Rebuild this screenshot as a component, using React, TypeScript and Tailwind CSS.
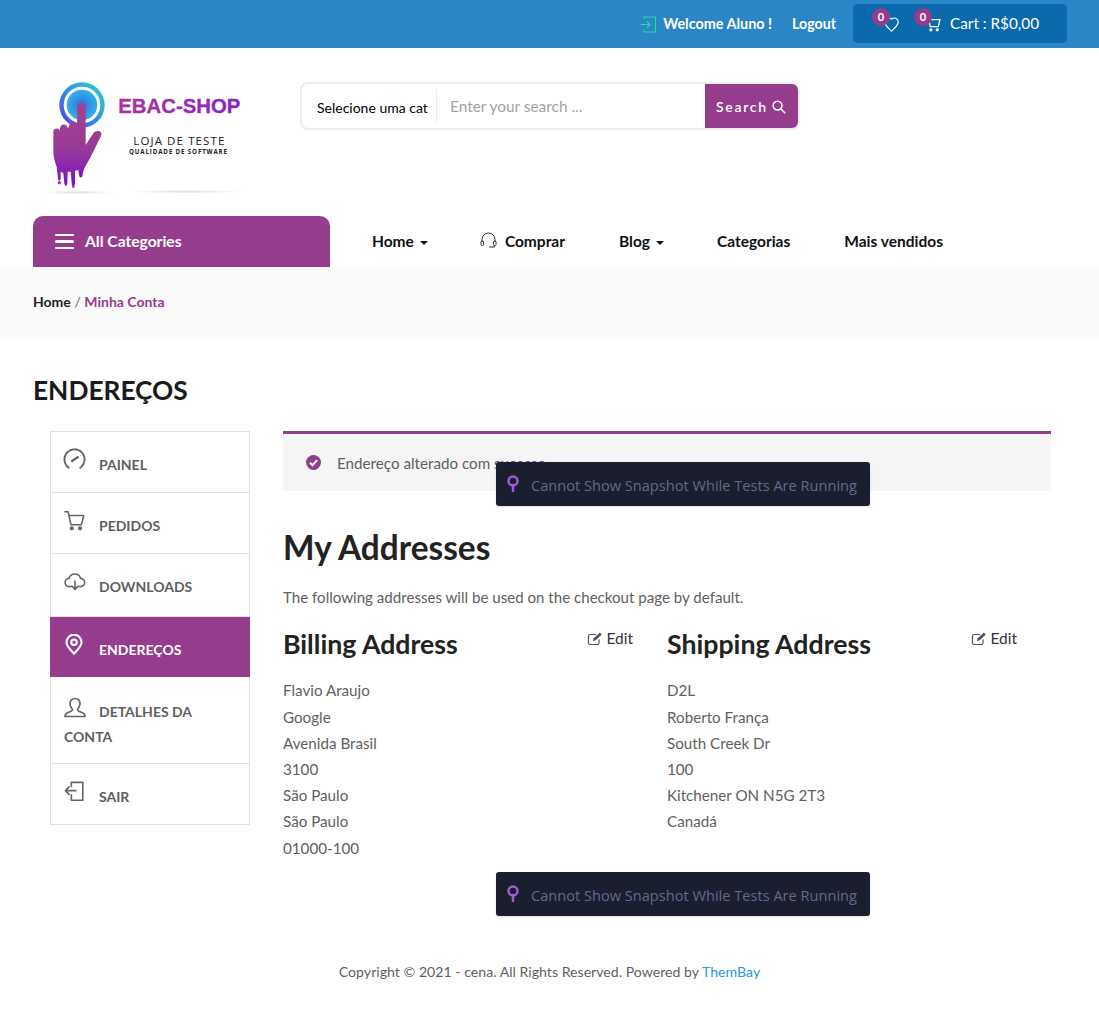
import React from "react";

function Ico({ children, size = 24, vb = "0 0 24 24", sw = 1.5, color = "currentColor", cls = "" }: any) {
  return (
    <svg width={size} height={size} viewBox={vb} fill="none" stroke={color} strokeWidth={sw} strokeLinecap="round" strokeLinejoin="round" className={cls}>
      {children}
    </svg>
  );
}

function Logo() {
  return (
    <svg width="210" height="122" viewBox="0 0 210 122" className="block overflow-visible">
      <defs>
        <linearGradient id="ring" x1="0" y1="1" x2="1" y2="0">
          <stop offset="0" stopColor="#5a38e0" />
          <stop offset="0.5" stopColor="#2f8fe8" />
          <stop offset="1" stopColor="#2fdcc0" />
        </linearGradient>
        <radialGradient id="core">
          <stop offset="0" stopColor="#2a6fe8" />
          <stop offset="1" stopColor="#35b0e8" />
        </radialGradient>
        <linearGradient id="hand" x1="0" y1="0" x2="0" y2="1">
          <stop offset="0" stopColor="#a5418c" />
          <stop offset="0.55" stopColor="#983a98" />
          <stop offset="1" stopColor="#7a10c8" />
        </linearGradient>
        <linearGradient id="word" x1="0" y1="0" x2="1" y2="0">
          <stop offset="0" stopColor="#a8359c" />
          <stop offset="1" stopColor="#8a22c4" />
        </linearGradient>
        <radialGradient id="sh">
          <stop offset="0" stopColor="#dcdaea" />
          <stop offset="1" stopColor="#ffffff" />
        </radialGradient>
      </defs>
      <g transform="translate(-6,-6) scale(0.33333)">
        <ellipse cx="145" cy="367" rx="105" ry="6" fill="url(#sh)" />
        <ellipse cx="470" cy="365" rx="170" ry="5" fill="url(#sh)" />
        <circle cx="156" cy="105" r="68" fill="url(#ring)" />
        <circle cx="156" cy="105" r="55" fill="#fff" />
        <circle cx="156" cy="105" r="46" fill="url(#core)" />
        <path
          d="M142 110 C142 95 167 95 167 110 L167 225 L190 190 C197 178 220 182 213 198 L180 265 C165 290 160 300 158 315 C157 325 148 325 147 315 L145 300 L135 302 L135 340 C135 352 125 352 125 340 L122 305 L113 305 L112 340 C112 350 104 350 103 340 L100 310 L92 305 L92 325 C92 335 84 335 84 325 L80 290 C72 270 70 255 70 240 L70 185 C70 172 90 172 90 185 L90 175 C92 160 112 160 113 175 L117 170 C118 152 140 152 141 170 Z"
          fill="url(#hand)"
        />
        <circle cx="88" cy="338" r="5" fill="#d020a0" />
        <circle cx="130" cy="350" r="4" fill="#d020a0" />
      </g>
      <text x="82.300" y="36.700" textLength="122" lengthAdjust="spacingAndGlyphs" fontFamily="Liberation Sans" fontWeight="700" fontSize="21" fill="url(#word)" stroke="url(#word)" strokeWidth="0.300">EBAC-SHOP</text>
      <text x="97.300" y="69" textLength="91" fontFamily="Open Sans" fontWeight="400" fontSize="11.500" fill="#222">LOJA DE TESTE</text>
      <text x="93" y="78" textLength="98" fontFamily="Open Sans" fontWeight="700" fontSize="6.200" fill="#222">QUALIDADE DE SOFTWARE</text>
    </svg>
  );
}

function Toast({ top }: { top: string }) {
  return (
    <div className={`absolute left-[496px] ${top} w-[374px] h-[44px] bg-[#1b1e2e] rounded-[3px] flex items-center pl-[11px] shadow-sm z-10`}>
      <svg width="12" height="17" viewBox="0 0 12 17" className="mr-[12px] -mt-[2px] shrink-0">
        <circle cx="6" cy="6" r="4.500" fill="none" stroke="#9c5fd8" strokeWidth="2.500" />
        <path d="M6 10 V16" stroke="#9c5fd8" strokeWidth="2.500" strokeLinecap="round" />
      </svg>
      <span className="font-['Open_Sans',sans-serif] text-[14.600px] text-[#626b8c] whitespace-nowrap mt-[3px]">Cannot Show Snapshot While Tests Are Running</span>
    </div>
  );
}

function SideItem({ icon, label, active, h, wrap }: any) {
  return (
    <div
      className={`border-b border-[#e2e2e2] px-[13px] text-[14px] font-bold ${active ? "bg-[#963c8c] text-white border-b-0 mx-[-1px] px-[14px]" : "text-[#5f5f5f]"} ${h}`}
    >
      {wrap ? (
        <div className="pt-[19px] leading-[25px]">
          <span className="inline-block w-[35px] h-[24px] align-[-3px]">{icon}</span>DETALHES DA
          <br />
          CONTA
        </div>
      ) : (
        <div className="flex items-center h-full">
          <span className="w-[35px] -mt-[5px] shrink-0">{icon}</span>
          <span className="mt-[5px]">{label}</span>
        </div>
      )}
    </div>
  );
}

const billing = ["Flavio Araujo", "Google", "Avenida Brasil", "3100", "São Paulo", "São Paulo ", "01000-100"];
const shipping = ["D2L", "Roberto França", "South Creek Dr", "100", "Kitchener ON N5G 2T3", "Canadá"];

function EditLink() {
  return (
    <span className="flex items-center gap-[3px] text-[15.500px] text-[#333] leading-none">
      <svg width="16" height="15" viewBox="0 0 16 15" fill="none" stroke="#555" strokeWidth="1.200">
        <path d="M12 8.500 V12 A1.500 1.500 0 0 1 10.500 13.500 H3 A1.500 1.500 0 0 1 1.500 12 V5 A1.500 1.500 0 0 1 3 3.500 H9" />
        <path d="M6 10 L6.500 7.500 L12.800 1.500 L14.800 3.500 L8.500 9.500 Z" fill="#555" stroke="none" />
      </svg>
      Edit
    </span>
  );
}

function Address({ title, lines, cls }: any) {
  return (
    <div className={cls}>
      <div className="flex justify-between items-start">
        <h3 className="text-[26.700px] font-bold leading-[32px] text-[#222]">{title}</h3>
        <div className="mt-[3px]"><EditLink /></div>
      </div>
      <div className="mt-[17.400px] text-[15.200px] leading-[26.200px] text-[#5f5f5f]">
        {lines.map((l: string) => (
          <div key={l}>{l}</div>
        ))}
      </div>
    </div>
  );
}

const Caret = () => <span className="ml-[6px] mt-[2px] w-0 h-0 border-x-[4px] border-x-transparent border-t-[4px] border-t-[#111]" />;

export default function App() {
  return (
    <div className="relative w-[1099px] h-[1020px] bg-white font-['Lato',sans-serif] overflow-hidden">
      {/* top bar */}
      <div className="h-[48px] bg-[#2b86c5] flex items-center justify-end pr-[32px]">
        <svg width="17" height="17" viewBox="0 0 17 17" fill="none" stroke="#22dcb0" strokeWidth="1.100" className="mr-[6px]">
          <path d="M4 3 V1 H15.500 V16 H4 V14" />
          <path d="M0.500 8.500 H10 M7 5.500 L10 8.500 L7 11.500" />
        </svg>
        <span className="text-white font-bold text-[14.400px] mr-[20px] -mt-[1px]">Welcome Aluno !</span>
        <span className="text-white font-bold text-[14.200px] mr-[17px] -mt-[1px]">Logout</span>
        <div className="relative w-[214px] h-[39px] -mt-[1px] bg-[#0b6aab] rounded-[5px] flex items-center pl-[30px]">
          <span className="absolute left-[19px] top-[4px] w-[18px] h-[18px] rounded-full bg-[#963c8c] text-white text-[11px] font-bold flex items-center justify-center z-10">0</span>
          <Ico size={19} sw={1.500} color="#fff" cls="mt-[1px] -ml-[1px]"><path d="M20.500 8.500 a5 5 0 0 0-8.500-3.200 a5 5 0 0 0-8.500 3.200 c0 5 5 8 8.500 12 c3.500-4 8.500-7 8.500-12z" /></Ico>
          <span className="absolute left-[61px] top-[4px] w-[18px] h-[18px] rounded-full bg-[#963c8c] text-white text-[11px] font-bold flex items-center justify-center z-10">0</span>
          <svg width="16" height="16" viewBox="0 0 15 15" fill="none" stroke="#fff" strokeWidth="1.200" className="ml-[24px] mt-[1px]">
            <path d="M0.500 1.500 H3 L5 10 H12.500 L14 3.500 H3.500" />
            <circle cx="5.500" cy="13" r="0.900" fill="#fff" />
            <circle cx="11.500" cy="13" r="0.900" fill="#fff" />
          </svg>
          <span className="text-white text-[15.300px] ml-[9px] whitespace-nowrap">Cart : R$0,00</span>
        </div>
      </div>

      {/* logo + search */}
      <div className="h-[168px] flex items-start pl-[36px]">
        <div className="mt-[28px] w-[210px]"><Logo /></div>
        <div className="ml-[54px] mt-[34px] w-[500px] h-[48px] border-2 border-[#ededed] rounded-[8px] flex items-stretch overflow-hidden bg-white">
          <div className="w-[135px] shrink-0 relative flex items-center pl-[15px] text-[14px] text-black whitespace-nowrap pt-[3px]">
            Selecione uma cat
            <span className="absolute right-0 top-[5px] bottom-[5px] w-px bg-[#ededed]" />
          </div>
          <div className="flex-1 flex items-center pl-[13px] text-[15.400px] text-[#a3a3a3] pt-[1px]">Enter your search ...</div>
          <div className="w-[93px] bg-[#963c8c] flex items-center pl-[11px] text-white text-[14px] font-semibold tracking-[1.700px] gap-[3px]">
            Search
            <Ico size={15} sw={2.600}><circle cx="10.500" cy="10.500" r="7" /><path d="M16 16l6 6" /></Ico>
          </div>
        </div>
      </div>

      {/* nav */}
      <div className="h-[51px] flex pl-[33px]">
        <div className="w-[297px] bg-[#963c8c] rounded-t-[10px] flex items-center pl-[22px] text-white font-bold text-[15.600px]">
          <span className="flex flex-col gap-[4px] mr-[11px]">
            <span className="block w-[19px] h-[2.500px] bg-white rounded" />
            <span className="block w-[19px] h-[2.500px] bg-white rounded" />
            <span className="block w-[19px] h-[2.500px] bg-white rounded" />
          </span>
          All Categories
        </div>
        <div className="flex items-center pl-[42px] text-[15.500px] font-bold text-[#111] whitespace-nowrap">
          <span className="flex items-center">Home<Caret /></span>
          <span className="flex items-center ml-[52px]">
            <svg width="17" height="17" viewBox="0 0 17 17" fill="none" stroke="#333" strokeWidth="1" className="mr-[8px] -mt-[3px]">
              <path d="M2 10 V7.500 A6.500 6.500 0 0 1 15 7.500 V10" />
              <rect x="1" y="9" width="2.500" height="4.500" rx="1" />
              <rect x="13.500" y="9" width="2.500" height="4.500" rx="1" />
              <path d="M14.500 13.500 V15 H9" />
            </svg>
            Comprar
          </span>
          <span className="flex items-center ml-[54px]">Blog<Caret /></span>
          <span className="ml-[53px]">Categorias</span>
          <span className="ml-[54px]">Mais vendidos</span>
        </div>
      </div>

      {/* breadcrumb */}
      <div className="h-[70px] bg-[#fafafa] pl-[33px] pt-[25px] text-[14px] leading-[20px] font-bold">
        <span className="text-[#222]">Home</span>
        <span className="text-[#666] font-normal"> / </span>
        <span className="text-[#963c8c]">Minha Conta</span>
      </div>

      {/* title */}
      <h1 className="pl-[33px] mt-[36px] text-[26.300px] leading-[34px] font-bold text-[#1a1a1a]">ENDEREÇOS</h1>

      {/* main */}
      <div className="flex mt-[24px] pl-[50px]">
        <div className="w-[200px] h-[394px] border border-[#e2e2e2] shrink-0 box-border">
          <SideItem h="h-[61px]" label="PAINEL" icon={
            <Ico size={23} sw={2} color="#666" cls="-ml-[1px]">
              <path d="M6 20.500 A10.500 10.500 0 1 1 18 20.500" strokeDasharray="4 1.200" />
              <path d="M9.500 13.500 L15.500 9.500" strokeWidth={2.400} />
            </Ico>
          } />
          <SideItem h="h-[61px]" label="PEDIDOS" icon={
            <Ico size={22} sw={1.700} color="#666">
              <path d="M1 2 H4.500 L7.500 16 H19 L21.500 6 H5.500" />
              <circle cx="8.500" cy="20" r="1.400" fill="#666" />
              <circle cx="17.500" cy="20" r="1.400" fill="#666" />
            </Ico>
          } />
          <SideItem h="h-[63px] pb-[2px]" label="DOWNLOADS" icon={
            <Ico size={22} sw={1.800} color="#666">
              <path d="M7 17 H6 A4.500 4.500 0 0 1 5.500 8 A6.500 6.500 0 0 1 18 8 A4.500 4.500 0 0 1 18 17 H17" />
              <path d="M12 11 V20 M8.500 16.500 L12 20 L15.500 16.500" />
            </Ico>
          } />
          <SideItem active h="h-[60px]" label="ENDEREÇOS" icon={
            <Ico size={22} sw={2.300} color="#fff" cls="-ml-[1px]">
              <path d="M12 21.500 C8 17 3.800 13.500 3.800 9 A8.200 8.200 0 0 1 20.200 9 C20.200 13.500 16 17 12 21.500 Z" />
              <circle cx="12" cy="9" r="3" />
            </Ico>
          } />
          <SideItem wrap h="h-[87px]" icon={
            <Ico size={24} sw={1.700} color="#666" cls="-ml-[1px]">
              <path d="M12 2.500 A5 5 0 0 0 7 7.500 C7 10 8 12 9.500 13.500 C9.500 15 8 15.500 5 16.500 C3 17.200 2 18.500 2 20.500 H22 C22 18.500 21 17.200 19 16.500 C16 15.500 14.500 15 14.500 13.500 C16 12 17 10 17 7.500 A5 5 0 0 0 12 2.500 Z" />
            </Ico>
          } />
          <SideItem h="h-[60px] border-b-0" label="SAIR" icon={
            <Ico size={22} sw={1.800} color="#666">
              <path d="M8 6 V1.500 H20.500 V21 H8 V15" />
              <path d="M1.500 10.500 H13 M5.500 6.500 L1.500 10.500 L5.500 14.500" />
            </Ico>
          } />
        </div>

        <div className="ml-[33px] w-[768px]">
          <div className="h-[60px] bg-[#f5f5f5] border-t-[3px] border-[#963c8c] flex items-center pl-[23px] text-[15.200px] text-[#5f5f5f]">
            <svg width="15" height="15" viewBox="0 0 15 15" className="mr-[16px] -mt-[1px]">
              <circle cx="7.500" cy="7.500" r="7.500" fill="#963c8c" />
              <path d="M4 7.800 L6.500 10.200 L11 5.200" fill="none" stroke="#fff" strokeWidth="2" />
            </svg>
            <span className="mt-[1px]">Endereço alterado com sucesso.</span>
          </div>
          <h2 className="mt-[35px] text-[33.400px] leading-[42px] font-bold text-[#222]">My Addresses</h2>
          <p className="mt-[17px] text-[15.100px] leading-[24px] text-[#5f5f5f]">The following addresses will be used on the checkout page by default.</p>
          <div className="flex mt-[19px]">
            <Address title="Billing Address" lines={billing} cls="w-[350px]" />
            <Address title="Shipping Address" lines={shipping} cls="w-[350px] ml-[34px]" />
          </div>
        </div>
      </div>

      {/* footer */}
      <div className="absolute left-0 right-0 top-[962px] text-center text-[14.150px] leading-[20px] text-[#5f5f5f]">
        Copyright © 2021 - cena. All Rights Reserved. Powered by <span className="text-[#2b96ea]">ThemBay</span>
      </div>

      <Toast top="top-[462px]" />
      <Toast top="top-[872px]" />
    </div>
  );
}
